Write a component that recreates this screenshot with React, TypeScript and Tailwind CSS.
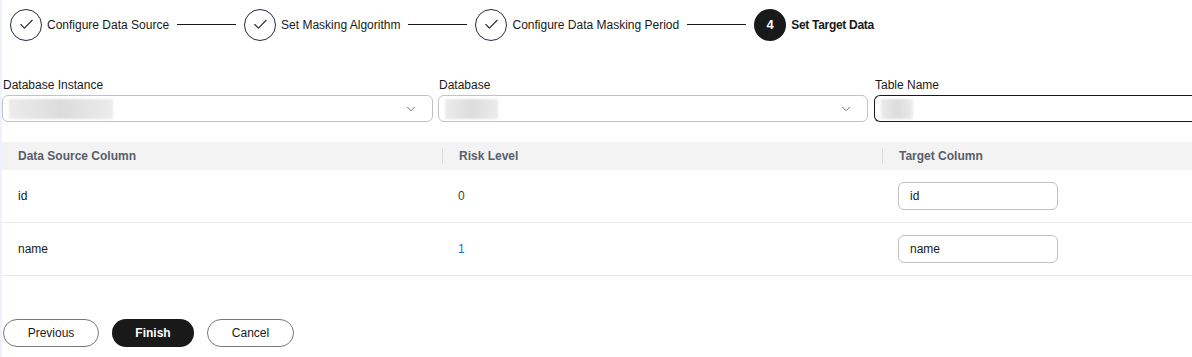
import { Check, ChevronDown } from 'lucide-react';

const STEPS = [
  { label: 'Configure Data Source', done: true },
  { label: 'Set Masking Algorithm', done: true },
  { label: 'Configure Data Masking Period', done: true },
  { label: 'Set Target Data', done: false },
];

const ROWS = [
  { source: 'id', risk: '0', riskClass: 'text-[#2f4a1c]', target: 'id' },
  { source: 'name', risk: '1', riskClass: 'text-[#0b74d6]', target: 'name' },
];

function Steps() {
  return (
    <div className="flex items-center h-[49px] pl-[8px]">
      {STEPS.map((step, i) => (
        <div key={step.label} className="flex items-center">
          {step.done ? (
            <div className="w-[32px] h-[32px] rounded-full border border-[#252b3a] flex items-center justify-center">
              <Check size={17} strokeWidth={1.6} className="text-[#252b3a]" />
            </div>
          ) : (
            <div className="w-[32px] h-[32px] rounded-full bg-[#191919] text-white flex items-center justify-center text-[13px] font-bold">
              {i + 1}
            </div>
          )}
          <span className={`ml-[5px] text-[12px] text-[#191919] ${step.done ? '' : 'font-bold tracking-[-0.3px]'}`}>{step.label}</span>
          {i < STEPS.length - 1 && <div className="w-[59px] h-px bg-[#191919] mx-[8px]" />}
        </div>
      ))}
    </div>
  );
}

function Field({ label, width, blur, select, active }: { label: string; width: string; blur: string; select?: boolean; active?: boolean }) {
  return (
    <div className={`flex flex-col ${width}`}>
      <label className="text-[12px] text-[#191919] leading-[16px] mb-[2px] ml-px">{label}</label>
      <div
        className={`h-[27px] rounded-[6px] bg-white flex items-center pl-[6px] pr-[14px] border ${
          active ? 'border-[#191919] rounded-r-none border-r-0' : 'border-[#c2c2c2]'
        }`}
      >
        <div className={`h-[20px] ${blur} bg-gradient-to-r from-[#ececec] via-[#dcdcdc] to-[#ececec] blur-[1px]`} />
        {select && <ChevronDown size={14} strokeWidth={1.5} className="ml-auto text-[#575d6c]" />}
      </div>
    </div>
  );
}

export default function App() {
  return (
    <div className="w-[1192px] h-[357px] bg-white border-l-2 border-[#eef3fa] font-['Liberation_Sans',Arial,sans-serif] overflow-hidden">
      <Steps />

      <div className="flex gap-[5px] mt-[28px]">
        <Field label="Database Instance" width="w-[431px]" blur="w-[104px]" select />
        <Field label="Database" width="w-[430px]" blur="w-[53px]" select />
        <Field label="Table Name" width="flex-1 ml-[1px]" blur="w-[32px]" active />
      </div>

      <div className="mt-[20px]">
        <div className="grid grid-cols-[440px_440px_1fr] h-[28px] bg-[#f3f3f3] items-center text-[12px] text-[#575d6c] font-bold">
          <div className="pl-[16px]">Data Source Column</div>
          <div className="pl-[16px] border-l border-[#dcdcdc] h-[16px] flex items-center">Risk Level</div>
          <div className="pl-[16px] border-l border-[#dcdcdc] h-[16px] flex items-center">Target Column</div>
        </div>
        {ROWS.map(row => (
          <div key={row.source} className="grid grid-cols-[440px_440px_1fr] h-[53px] items-center border-b border-[#e8e8e8] text-[12px] text-[#191919]">
            <div className="pl-[16px]">{row.source}</div>
            <div className={`pl-[16px] ${row.riskClass}`}>{row.risk}</div>
            <div className="pl-[16px]">
              <div className="w-[160px] h-[28px] rounded-[6px] border border-[#c2c2c2] flex items-center px-[11px]">{row.target}</div>
            </div>
          </div>
        ))}
      </div>

      <div className="flex mt-[43px] pl-[1px] text-[12px]">
        <button className="w-[96px] h-[28px] rounded-full border border-[#777] text-[#191919] bg-white">Previous</button>
        <button className="ml-[13px] w-[82px] h-[28px] rounded-full bg-[#191919] text-white font-bold">Finish</button>
        <button className="ml-[13px] w-[87px] h-[28px] rounded-full border border-[#777] text-[#191919] bg-white">Cancel</button>
      </div>
    </div>
  );
}
